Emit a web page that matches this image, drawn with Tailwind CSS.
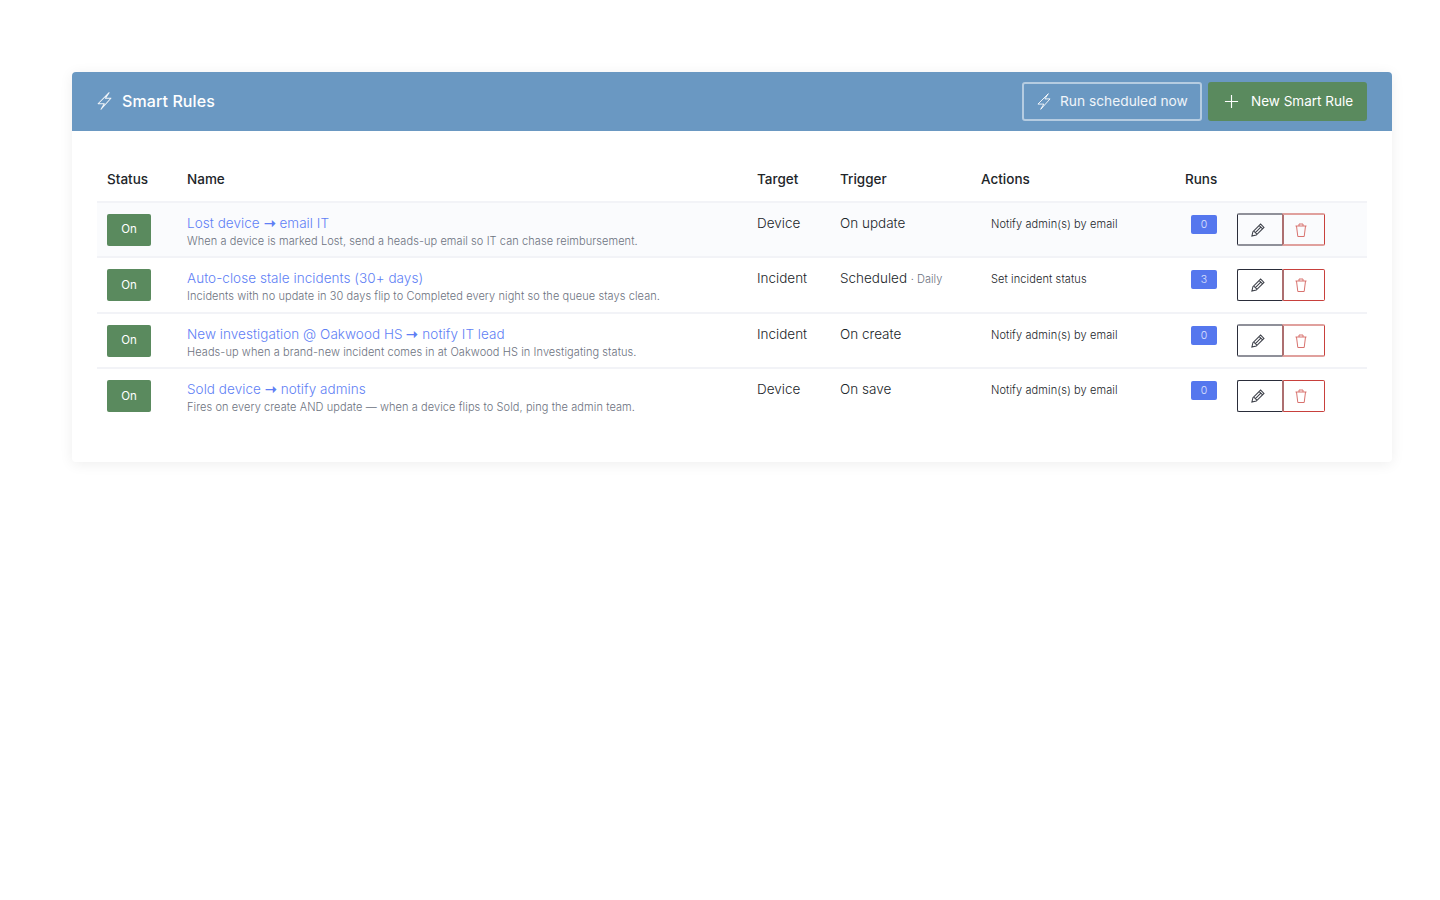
<!DOCTYPE html>
<html lang="en">
<head>
  <meta charset="UTF-8">
  <title>Smart Rules</title>
  <script src="https://cdn.jsdelivr.net/npm/@tailwindcss/browser@4"></script>
</head>
<body class="bg-white min-h-screen font-['Inter',sans-serif] text-[#212529]">
  <main class="pt-[72px] pl-[72px] pr-[48px] pb-8">
    <section class="bg-white rounded shadow-[0_2px_14px_rgba(0,0,0,0.07)]">
      <!-- Header -->
      <header class="h-[59px] bg-[#6a98c2] rounded-t flex items-center justify-between px-[25px] text-white">
        <h1 class="flex items-center gap-[10px] text-[16px] font-medium tracking-[0.1px] pb-[1px]">
          <svg class="w-[15px] h-[18px] opacity-90" viewBox="0 0 39 49" fill="none" stroke="currentColor" stroke-width="2.8" stroke-linejoin="round"><path d="M32 2 2 32h17l-9 15 27-30H22L32 2Z"/></svg>
          Smart Rules
        </h1>
        <div class="flex gap-[6px]">
          <button class="h-[39px] w-[180px] flex items-center gap-[9px] pl-[13px] rounded-[3px] border-2 border-white/50 text-white/90 text-[13.75px]">
            <svg class="w-[14px] h-[17px]" viewBox="0 0 39 49" fill="none" stroke="currentColor" stroke-width="2.8" stroke-linejoin="round"><path d="M32 2 2 32h17l-9 15 27-30H22L32 2Z"/></svg>
            Run scheduled now
          </button>
          <button class="h-[39px] w-[159px] flex items-center gap-[12px] pl-[16px] rounded-[3px] bg-[#5a8a5e] text-[13.5px]">
            <svg class="w-[15px] h-[15px]" viewBox="0 0 16 16" fill="none" stroke="currentColor" stroke-width="1.2"><path d="M8 1v14M1 8h14"/></svg>
            New Smart Rule
          </button>
        </div>
      </header>

      <!-- Table -->
      <div class="pt-[30px] px-[25px] pb-[39px]">
        <table class="w-full table-fixed border-collapse text-[13.5px] font-light">
          <colgroup>
            <col class="w-[90px]"><col class="w-[570px]"><col class="w-[83px]"><col class="w-[141px]"><col class="w-[204px]"><col class="w-[52px]"><col>
          </colgroup>
          <thead>
            <tr class="h-[41px] text-left border-b-2 border-[#f2f3f7]">
              <th class="pl-[10px] pb-[4px] font-medium">Status</th><th class="pb-[4px] font-medium">Name</th><th class="pb-[4px] font-medium">Target</th><th class="pb-[4px] font-medium">Trigger</th><th class="pb-[4px] font-medium">Actions</th><th class="pb-[4px] font-medium">Runs</th><th></th>
            </tr>
          </thead>
          <tbody>
            <tr class="h-[55px] border-b-2 border-[#f2f3f7] bg-[#fafbfd]">
              <td class="pl-[10px]"><span class="flex items-center justify-center w-[44px] h-[32px] pt-[1px] rounded-[2px] bg-[#5a8a5e] text-white text-[11.5px] font-normal">On</span></td>
              <td class="align-top pt-[12px]"><a href="#" class="block text-[#5f7ff5] leading-[17px] tracking-[0.05px]">Lost device <span class="font-semibold">➝</span> email IT</a><p class="text-[11px] text-[#6c7280] leading-[15px] mt-[2px] tracking-[0.08px]">When a device is marked Lost, send a heads-up email so IT can chase reimbursement.</p></td>
              <td class="align-top pt-[10px]">Device</td>
              <td class="align-top pt-[10px]">On update</td>
              <td class="align-top pt-[13px] pl-[10px] text-[11px] tracking-[0.1px]">Notify admin(s) by email</td>
              <td class="align-top pt-[12px] pl-[6px]"><span class="flex items-center justify-center w-[26px] h-[19px] rounded-[2px] bg-[#5577ee] text-white/80 text-[10.5px]">0</span></td>
              <td><div class="flex"><button class="w-[45px] h-[33px] pr-[4px] flex items-center justify-center border border-r-0 border-y-2 border-[#2a2d3a] border-y-[#8f9099] rounded-l-[2px]"><svg class="w-[14px] h-[14px]" viewBox="0 0 16 16" fill="none" stroke="#3c3f48" stroke-width="1.2"><path d="M1 15 2.200 10 11 1.200 14.800 5 6 13.800 1 15ZM9.500 3 13 6.500M3.500 9.500l3 3M5 11l6.500-6.500"/></svg></button><button class="w-[43px] h-[33px] pr-[6px] flex items-center justify-center border border-l-2 border-y-2 border-[#c8403c] border-l-[#ad6f70] border-y-[#e0a09d] rounded-r-[2px]"><svg class="w-[12px] h-[14px]" viewBox="0 0 12 14" fill="none" stroke="#d8726e" stroke-width="1"><path d="M.5 3h11M1.500 3l1.300 10.500h6.400L10.500 3M4 3V1h4v2"/></svg></button></div></td>
            </tr>
            <tr class="h-[56px] border-b-2 border-[#f2f3f7]">
              <td class="pl-[10px]"><span class="flex items-center justify-center w-[44px] h-[32px] pt-[1px] rounded-[2px] bg-[#5a8a5e] text-white text-[11.5px] font-normal">On</span></td>
              <td class="align-top pt-[12px]"><a href="#" class="block text-[#5f7ff5] leading-[17px] tracking-[0.05px]">Auto-close stale incidents (30+ days)</a><p class="text-[11px] text-[#6c7280] leading-[15px] mt-[2px] tracking-[0.08px]">Incidents with no update in 30 days flip to Completed every night so the queue stays clean.</p></td>
              <td class="align-top pt-[10px]">Incident</td>
              <td class="align-top pt-[10px]">Scheduled <span class="text-[11px] text-[#6c7280]">· Daily</span></td>
              <td class="align-top pt-[13px] pl-[10px] text-[11px] tracking-[0.1px]">Set incident status</td>
              <td class="align-top pt-[12px] pl-[6px]"><span class="flex items-center justify-center w-[26px] h-[19px] rounded-[2px] bg-[#5577ee] text-white/80 text-[10.5px]">3</span></td>
              <td><div class="flex"><button class="w-[45px] h-[32px] pr-[4px] flex items-center justify-center border border-r-0 border-[#2a2d3a] rounded-l-[2px]"><svg class="w-[14px] h-[14px]" viewBox="0 0 16 16" fill="none" stroke="#3c3f48" stroke-width="1.2"><path d="M1 15 2.200 10 11 1.200 14.800 5 6 13.800 1 15ZM9.500 3 13 6.500M3.500 9.500l3 3M5 11l6.500-6.500"/></svg></button><button class="w-[43px] h-[32px] pr-[6px] flex items-center justify-center border border-l-2 border-[#c8403c] border-l-[#ad6f70] rounded-r-[2px]"><svg class="w-[12px] h-[14px]" viewBox="0 0 12 14" fill="none" stroke="#d8726e" stroke-width="1"><path d="M.5 3h11M1.500 3l1.300 10.500h6.400L10.500 3M4 3V1h4v2"/></svg></button></div></td>
            </tr>
            <tr class="h-[55px] border-b-2 border-[#f2f3f7]">
              <td class="pl-[10px]"><span class="flex items-center justify-center w-[44px] h-[32px] pt-[1px] rounded-[2px] bg-[#5a8a5e] text-white text-[11.5px] font-normal">On</span></td>
              <td class="align-top pt-[12px]"><a href="#" class="block text-[#5f7ff5] leading-[17px] tracking-[0.05px]">New investigation @ Oakwood HS <span class="font-semibold">➝</span> notify IT lead</a><p class="text-[11px] text-[#6c7280] leading-[15px] mt-[2px] tracking-[0.08px]">Heads-up when a brand-new incident comes in at Oakwood HS in Investigating status.</p></td>
              <td class="align-top pt-[10px]">Incident</td>
              <td class="align-top pt-[10px]">On create</td>
              <td class="align-top pt-[13px] pl-[10px] text-[11px] tracking-[0.1px]">Notify admin(s) by email</td>
              <td class="align-top pt-[12px] pl-[6px]"><span class="flex items-center justify-center w-[26px] h-[19px] rounded-[2px] bg-[#5577ee] text-white/80 text-[10.5px]">0</span></td>
              <td><div class="flex"><button class="w-[45px] h-[33px] pr-[4px] flex items-center justify-center border border-r-0 border-y-2 border-[#2a2d3a] border-y-[#8f9099] rounded-l-[2px]"><svg class="w-[14px] h-[14px]" viewBox="0 0 16 16" fill="none" stroke="#3c3f48" stroke-width="1.2"><path d="M1 15 2.200 10 11 1.200 14.800 5 6 13.800 1 15ZM9.500 3 13 6.500M3.500 9.500l3 3M5 11l6.500-6.500"/></svg></button><button class="w-[43px] h-[33px] pr-[6px] flex items-center justify-center border border-l-2 border-y-2 border-[#c8403c] border-l-[#ad6f70] border-y-[#e0a09d] rounded-r-[2px]"><svg class="w-[12px] h-[14px]" viewBox="0 0 12 14" fill="none" stroke="#d8726e" stroke-width="1"><path d="M.5 3h11M1.500 3l1.300 10.500h6.400L10.500 3M4 3V1h4v2"/></svg></button></div></td>
            </tr>
            <tr class="h-[55px]">
              <td class="pl-[10px]"><span class="flex items-center justify-center w-[44px] h-[32px] pt-[1px] rounded-[2px] bg-[#5a8a5e] text-white text-[11.5px] font-normal">On</span></td>
              <td class="align-top pt-[12px]"><a href="#" class="block text-[#5f7ff5] leading-[17px] tracking-[0.05px]">Sold device <span class="font-semibold">➝</span> notify admins</a><p class="text-[11px] text-[#6c7280] leading-[15px] mt-[2px] tracking-[0.08px]">Fires on every create AND update — when a device flips to Sold, ping the admin team.</p></td>
              <td class="align-top pt-[10px]">Device</td>
              <td class="align-top pt-[10px]">On save</td>
              <td class="align-top pt-[13px] pl-[10px] text-[11px] tracking-[0.1px]">Notify admin(s) by email</td>
              <td class="align-top pt-[12px] pl-[6px]"><span class="flex items-center justify-center w-[26px] h-[19px] rounded-[2px] bg-[#5577ee] text-white/80 text-[10.5px]">0</span></td>
              <td><div class="flex"><button class="w-[45px] h-[32px] pr-[4px] flex items-center justify-center border border-r-0 border-[#2a2d3a] rounded-l-[2px]"><svg class="w-[14px] h-[14px]" viewBox="0 0 16 16" fill="none" stroke="#3c3f48" stroke-width="1.2"><path d="M1 15 2.200 10 11 1.200 14.800 5 6 13.800 1 15ZM9.500 3 13 6.500M3.500 9.500l3 3M5 11l6.500-6.500"/></svg></button><button class="w-[43px] h-[32px] pr-[6px] flex items-center justify-center border border-l-2 border-[#c8403c] border-l-[#ad6f70] rounded-r-[2px]"><svg class="w-[12px] h-[14px]" viewBox="0 0 12 14" fill="none" stroke="#d8726e" stroke-width="1"><path d="M.5 3h11M1.500 3l1.300 10.500h6.400L10.500 3M4 3V1h4v2"/></svg></button></div></td>
            </tr>
          </tbody>
        </table>
      </div>
    </section>
  </main>
</body>
</html>
